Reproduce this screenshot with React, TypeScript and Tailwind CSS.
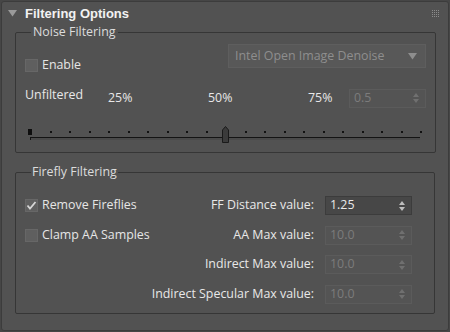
import React from 'react';

const font = { fontFamily: '"Open Sans", "Liberation Sans", Arial, sans-serif' };
const titleFont = { fontFamily: '"Liberation Sans", Arial, sans-serif' };

// small checkbox like the 3ds Max rollout ones
const Check: React.FC<{ checked?: boolean; label: string }> = ({ checked, label }) => (
  <div className="flex items-center h-[14px]">
    <div className="w-[13px] h-[13px] bg-[#5f5f5f] border border-[#676767] flex items-center justify-center">
      {checked && (
        <svg width="11" height="11" viewBox="0 0 11 11">
          <path d="M1.5 5.5 L4 8.5 L9.5 2" fill="none" stroke="#d6d6d6" strokeWidth="1.8" />
        </svg>
      )}
    </div>
    <span className="ml-[4px] text-[12.4px] text-[#e6e6e6] leading-none">{label}</span>
  </div>
);

const Spin: React.FC<{ value: string; active?: boolean; w: string }> = ({ value, active, w }) => (
  <div
    className={
      'h-[19px] flex items-center justify-between pl-[4px] pr-[6px] border ' +
      w +
      (active ? ' bg-[#474747] border-[#3c3c3c]' : ' bg-[#545454] border-[#5b5b5b]')
    }
  >
    <span className={'text-[12.4px] leading-none ' + (active ? 'text-[#eaeaea]' : 'text-[#7c7c7c]')}>{value}</span>
    <svg width="6" height="12" viewBox="0 0 6 12">
      <path d="M0 5 L3 1 L6 5 Z" fill={active ? '#bdbdbd' : '#707070'} />
      <path d="M0 7 L3 11 L6 7 Z" fill={active ? '#bdbdbd' : '#707070'} />
    </svg>
  </div>
);

const Slider: React.FC = () => {
  const ticks = Array.from({ length: 21 }, (_, i) => 5 + i * 19.5);
  return (
    <svg width="400" height="17" viewBox="0 0 400 17">
      {/* groove */}
      <rect x="5" y="11" width="390" height="3" fill="#4a4a4a" />
      <line x1="5" y1="11.5" x2="395" y2="11.5" stroke="#141414" strokeWidth="1" />
      <line x1="5.5" y1="11" x2="5.5" y2="14" stroke="#141414" strokeWidth="1" />
      {ticks.slice(1).map((x, i) =>
        i === 9 ? null : <rect key={i} x={Math.round(x)} y="5" width="2" height="2" fill="#111" />
      )}
      <rect x="3" y="3" width="4" height="6" fill="#0e0e0e" />
      {/* thumb */}
      <path d="M197.5 4 L200.5 0.5 L203.5 4 L203.5 16.5 L197.5 16.5 Z" fill="#3b3b3b" stroke="#1a1a1a" strokeWidth="1" />
    </svg>
  );
};

export default function App() {
  return (
    <div className="w-[450px] h-[332px] bg-[#464646] p-[1px]" style={font}>
      <div className="w-[448px] h-[330px] bg-[#525252] border border-[#3c3c3c] rounded-[3px] flex flex-col">
        {/* header */}
        <div className="h-[23px] flex items-center pl-[6px] pr-[8px]">
          <svg width="9" height="7" viewBox="0 0 9 7">
            <path d="M0 0 L9 0 L4.5 6.5 Z" fill="#9a9a9a" />
          </svg>
          <span className="ml-[8px] text-[13px] font-bold text-[#f2f2f2] leading-none" style={titleFont}>
            Filtering Options
          </span>
          <div className="flex-1" />
          <svg width="8" height="8" viewBox="0 0 8 8">
            {[0, 2, 4, 6].map(x =>
              [0, 2, 4, 6].map(y => <rect key={x + '-' + y} x={x} y={y} width="1" height="1" fill="#8c8c8c" />)
            )}
          </svg>
        </div>

        {/* noise filtering */}
        <fieldset className="ml-[13px] w-[420px] h-[128px] border border-[#363636] rounded-[2px] pl-[9px] pr-[9px]">
          <legend className="ml-[6px] px-[2px] text-[12.4px] text-[#dcdcdc] leading-[14px]">Noise Filtering</legend>
          <div className="flex items-start justify-between mt-[5px]">
            <div className="mt-[14px]">
              <Check label="Enable" />
            </div>
            <div className="w-[198px] h-[24px] bg-[#585858] border border-[#5e5e5e] flex items-center justify-between pl-[6px] pr-[8px]">
              <span className="text-[12.4px] text-[#8e8e8e] leading-none">Intel Open Image Denoise</span>
              <svg width="9" height="7" viewBox="0 0 9 7">
                <path d="M0 0 L9 0 L4.5 6.5 Z" fill="#8e8e8e" />
              </svg>
            </div>
          </div>
          <div className="flex items-center mt-[16px] h-[20px] text-[12.4px] text-[#e8e8e8] leading-none">
            <span className="w-[83px] pb-[5px]">Unfiltered</span>
            <span className="w-[100px]">25%</span>
            <span className="w-[100px]">50%</span>
            <span className="w-[41px]">75%</span>
            <Spin value="0.5" w="w-[77px]" />
          </div>
          <div className="mt-[18px]">
            <Slider />
          </div>
        </fieldset>

        {/* firefly filtering */}
        <fieldset className="ml-[13px] mt-[12px] w-[420px] h-[149px] border border-[#363636] rounded-[2px] pl-[9px] pr-[22px]">
          <legend className="ml-[6px] px-[1px] text-[12.4px] text-[#dcdcdc] leading-[14px]">Firefly Filtering</legend>
          <div className="flex flex-col gap-[10.5px] mt-[17px]">
            <div className="flex items-center h-[19px]">
              <Check checked label="Remove Fireflies" />
              <span className="flex-1 text-right pr-[11px] text-[12.4px] text-[#e8e8e8] leading-none">FF Distance value:</span>
              <Spin value="1.25" active w="w-[87px]" />
            </div>
            <div className="flex items-center h-[19px]">
              <Check label="Clamp AA Samples" />
              <span className="flex-1 text-right pr-[11px] text-[12.4px] text-[#e8e8e8] leading-none">AA Max value:</span>
              <Spin value="10.0" w="w-[87px]" />
            </div>
            <div className="flex items-center h-[19px]">
              <span className="flex-1 text-right pr-[11px] text-[12.4px] text-[#e8e8e8] leading-none">Indirect Max value:</span>
              <Spin value="10.0" w="w-[87px]" />
            </div>
            <div className="flex items-center h-[19px]">
              <span className="flex-1 text-right pr-[11px] text-[12.4px] text-[#e8e8e8] leading-none">Indirect Specular Max value:</span>
              <Spin value="10.0" w="w-[87px]" />
            </div>
          </div>
        </fieldset>
      </div>
    </div>
  );
}
